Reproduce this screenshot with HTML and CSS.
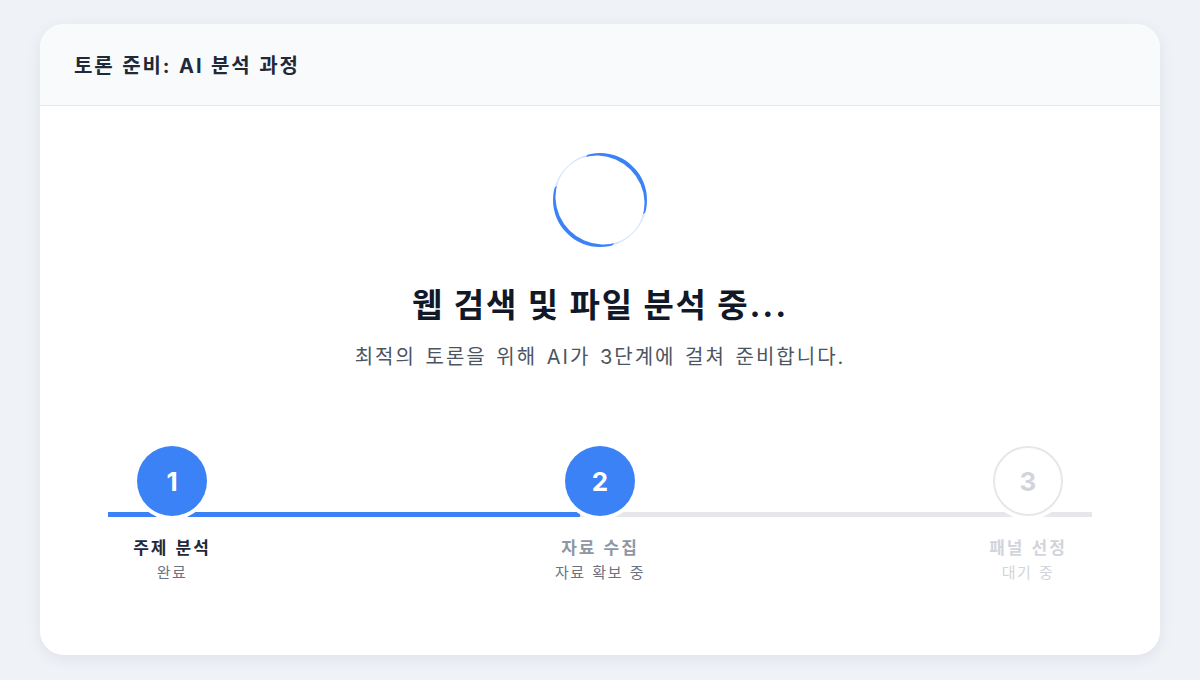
FILE: index.html
```html
<!DOCTYPE html>
<html lang="ko">
<head>
    <meta charset="UTF-8">
    <meta name="viewport" content="width=device-width, initial-scale=1.0">
    <title>토론 준비</title>
    <link rel="stylesheet" href="styles.css">
</head>
<body>
    <div class="card">
        <div class="card-header">
            <h2>토론 준비: AI 분석 과정</h2>
        </div>

        <div class="card-body">
            <div class="spinner"></div>
            <h1 class="title">웹 검색 및 파일 분석 중...</h1>
            <p class="subtitle">최적의 토론을 위해 AI가 3단계에 걸쳐 준비합니다.</p>

            <div class="stepper">
                <div class="track"><div class="track-fill"></div></div>
                <div class="steps">
                    <div class="step done">
                        <div class="step-circle">1</div>
                        <div class="step-label">주제 분석</div>
                        <div class="step-status">완료</div>
                    </div>
                    <div class="step active">
                        <div class="step-circle">2</div>
                        <div class="step-label">자료 수집</div>
                        <div class="step-status">자료 확보 중</div>
                    </div>
                    <div class="step waiting">
                        <div class="step-circle">3</div>
                        <div class="step-label">패널 선정</div>
                        <div class="step-status">대기 중</div>
                    </div>
                </div>
            </div>
        </div>
    </div>
</body>
</html>
```

FILE: styles.css
```css
body {
    font-family: Inter, "Noto Sans CJK KR", sans-serif;
    background-color: #eff2f7;
    margin: 0;
    padding: 24px 40px;
}
.card {
    background-color: white;
    border-radius: 24px;
    box-shadow: 0 4px 16px rgba(15, 23, 42, 0.07);
    overflow: hidden;
}
.card-header {
    background-color: #f8fafc;
    border-bottom: 1px solid #e5e7eb;
    padding: 0 34px;
    height: 81px;
    display: flex;
    align-items: center;
}
h2 {
    margin: 0;
    font-size: 20px;
    font-weight: 700;
    letter-spacing: 1.9px;
    word-spacing: 1px;
    color: #1f2937;
}
.card-body {
    padding: 47px 68px 72px;
    display: flex;
    flex-direction: column;
    align-items: center;
}
.spinner {
    width: 94px;
    height: 94px;
    box-sizing: border-box;
    border-radius: 50%;
    border-style: solid;
    border-width: 4px 1px;
    border-color: #3b82f6 #d3e2fc;
    transform: rotate(45deg);
}
.title {
    margin: 38px 0 0;
    font-size: 33px;
    line-height: 40px;
    font-weight: 700;
    letter-spacing: 1.8px;
    word-spacing: 0;
    color: #111827;
}
.subtitle {
    margin: 18px 0 0;
    font-size: 20px;
    line-height: 28px;
    letter-spacing: 2px;
    word-spacing: 2px;
    color: #4b5563;
}
.stepper {
    position: relative;
    width: 100%;
    margin-top: 75px;
}
.track {
    position: absolute;
    left: 0;
    right: 0;
    top: 66px;
    height: 5px;
    background-color: #e5e7eb;
}
.track-fill {
    width: 48%;
    height: 100%;
    background-color: #3b82f6;
}
.steps {
    position: relative;
    display: flex;
    justify-content: space-between;
    padding: 0 24px;
}
.step {
    width: 80px;
    display: flex;
    flex-direction: column;
    align-items: center;
}
.step-circle {
    width: 70px;
    height: 70px;
    box-sizing: border-box;
    border-radius: 50%;
    display: flex;
    align-items: center;
    justify-content: center;
    font-size: 26px;
    font-weight: 700;
    color: white;
    background-color: #3b82f6;
    box-shadow: 0 0 0 4px white;
}
.step-label {
    margin-top: 20px;
    font-size: 17px;
    line-height: 24px;
    font-weight: 700;
    letter-spacing: 2px;
    word-spacing: 1px;
    color: #1f2937;
    white-space: nowrap;
}
.step-status {
    margin-top: 3px;
    font-size: 15px;
    line-height: 20px;
    letter-spacing: 1.5px;
    word-spacing: 1px;
    color: #6b7280;
    white-space: nowrap;
}
.active .step-label {
    color: #8f97a4;
}
.waiting .step-circle {
    background-color: white;
    border: 2px solid #e5e7eb;
    color: #d1d5db;
}
.waiting .step-label,
.waiting .step-status {
    color: #d1d5db;
}
```
